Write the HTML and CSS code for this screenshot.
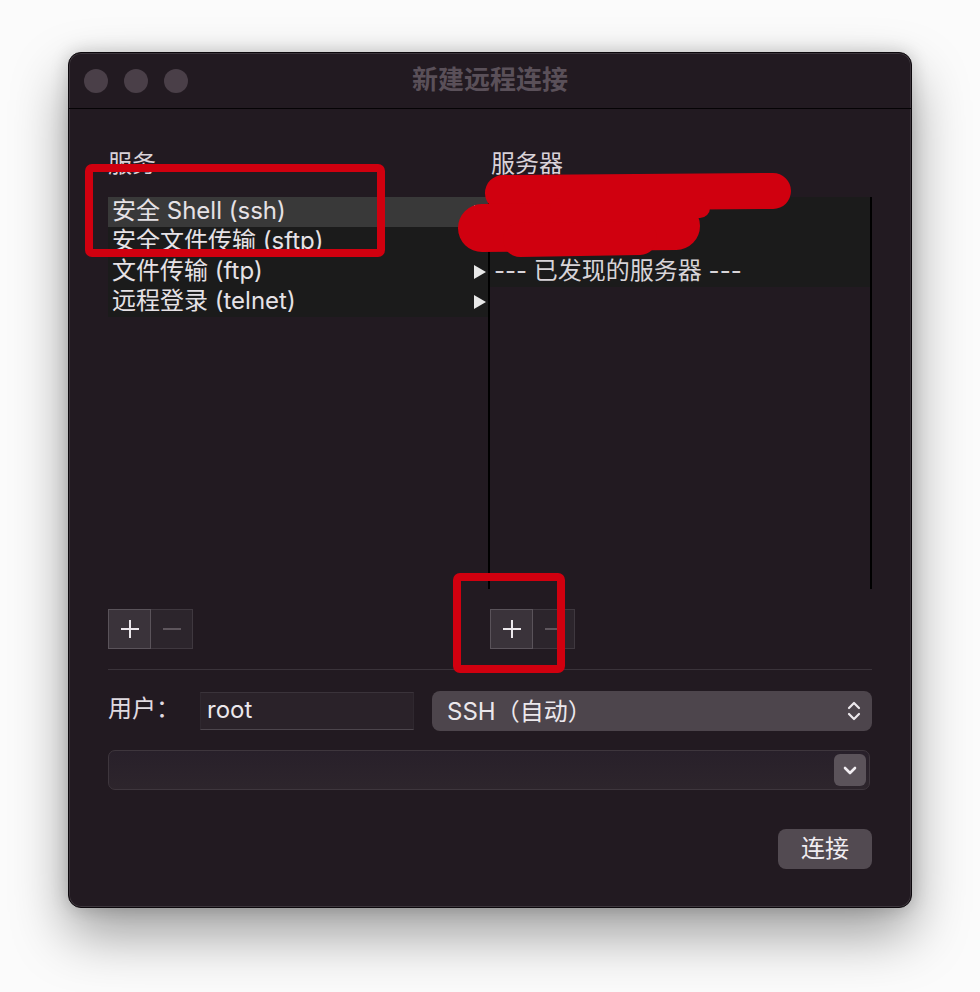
FILE: index.html
```html
<!DOCTYPE html>
<html lang="zh-CN">
<head>
<meta charset="utf-8">
<title>新建远程连接</title>
<link rel="stylesheet" href="styles.css">
</head>
<body>
<div class="page">
  <div class="window">
    <div class="titlebar">
      <div class="lights">
        <span class="light"></span><span class="light"></span><span class="light"></span>
      </div>
      <div class="title">新建远程连接</div>
      <div></div>
    </div>
    <div class="content">
      <div class="columns">
        <div class="col col-left">
          <div class="label">服务</div>
          <div class="list">
            <div class="row selected"><span>安全 Shell (ssh)</span><i class="tri"></i></div>
            <div class="row"><span>安全文件传输 (sftp)</span><i class="tri"></i></div>
            <div class="row"><span>文件传输 (ftp)</span><i class="tri"></i></div>
            <div class="row"><span>远程登录 (telnet)</span><i class="tri"></i></div>
          </div>
          <div class="pm">
            <button class="pm-btn plus"><svg width="20" height="20" viewBox="0 0 20 20"><path d="M10 1v18M1 10h18" stroke="#ece8ec" stroke-width="2"/></svg></button>
            <button class="pm-btn minus"><svg width="20" height="20" viewBox="0 0 20 20"><path d="M1 10h18" stroke="#5e565d" stroke-width="2"/></svg></button>
          </div>
        </div>
        <div class="col col-right">
          <div class="label">服务器</div>
          <div class="list list-right">
            <div class="row"></div>
            <div class="row"></div>
            <div class="row"><span>--- 已发现的服务器 ---</span></div>
          </div>
          <div class="pm">
            <button class="pm-btn plus"><svg width="20" height="20" viewBox="0 0 20 20"><path d="M10 1v18M1 10h18" stroke="#ece8ec" stroke-width="2"/></svg></button>
            <button class="pm-btn minus"><svg width="20" height="20" viewBox="0 0 20 20"><path d="M1 10h18" stroke="#5e565d" stroke-width="2"/></svg></button>
          </div>
        </div>
      </div>
      <div class="sep"></div>
      <div class="form-row">
        <div class="user-label">用户：</div>
        <div class="input">root</div>
        <div class="popup">
          <span>SSH（自动）</span>
          <svg class="updown" width="16" height="26" viewBox="0 0 16 26"><path d="M3 10l5-5 5 5M3 16l5 5 5-5" fill="none" stroke="#ece8ec" stroke-width="2.2" stroke-linecap="round" stroke-linejoin="round"/></svg>
        </div>
      </div>
      <div class="combo">
        <div class="combo-btn"><svg width="32" height="32" viewBox="0 0 32 32"><path d="M11 14l5 5 5-5" fill="none" stroke="#f2eef2" stroke-width="2.6" stroke-linecap="round" stroke-linejoin="round"/></svg></div>
      </div>
      <div class="actions">
        <button class="connect">连接</button>
      </div>
    </div>
  </div>
  <svg class="marks" width="980" height="992" viewBox="0 0 980 992">
    <rect x="89" y="168" width="292" height="85" rx="3" fill="none" stroke="#d0000f" stroke-width="8"/>
    <rect x="457" y="577" width="104" height="92" rx="3" fill="none" stroke="#d0000f" stroke-width="8"/>
    <g fill="#d0000f" stroke="#d0000f" stroke-linecap="round" stroke-linejoin="round">
      <path d="M503 193 L773 191" stroke-width="36" fill="none"/>
      <path d="M482 228 L676 226" stroke-width="48" fill="none"/>
      <path d="M520 240 L640 238" stroke-width="34" fill="none"/>
      <path d="M560 208 L700 208" stroke-width="20" fill="none"/>
    </g>
  </svg>
</div>
</body>
</html>
```
FILE: styles.css
```css
* { box-sizing: border-box; }
html, body { margin: 0; padding: 0; }
body {
  background: #fbfbfb;
  font-family: Inter, "Noto Sans CJK SC", sans-serif;
  color: #e6e2e6;
}
.page {
  position: relative;
  width: 980px;
  height: 992px;
  padding: 52px 68px 0 68px;
}
.window {
  width: 844px;
  height: 856px;
  background: #221a21;
  border-radius: 13px;
  border: 1px solid #0c080c;
  box-shadow: inset 0 0 0 1px rgba(255,255,255,0.12),
              0 26px 55px rgba(0,0,0,0.38),
              0 0 18px rgba(0,0,0,0.18);
  overflow: hidden;
  display: flex;
  flex-direction: column;
}
.titlebar {
  height: 56px;
  border-bottom: 1px solid #050305;
  display: grid;
  grid-template-columns: 1fr auto 1fr;
  align-items: center;
  flex: none;
}
.lights {
  display: flex;
  gap: 16px;
  padding-left: 15px;
  padding-top: 1px;
}
.light {
  width: 24px;
  height: 24px;
  border-radius: 50%;
  background: #4a3f48;
}
.title {
  font-family: "Noto Sans CJK SC", sans-serif;
  font-size: 26px;
  font-weight: 700;
  color: #5a5059;
  line-height: 30px;
  margin-top: -5px;
}
.content {
  padding: 40px 39px 0 39px;
  display: flex;
  flex-direction: column;
}
.columns {
  display: grid;
  grid-template-columns: 380px 384px;
}
.label {
  font-size: 24px;
  line-height: 30px;
  height: 30px;
  color: #d9d2d9;
  margin-bottom: 18px;
}
.col-right .label { padding-left: 3px; }
.list {
  height: 392px;
}
.list-right {
  border-left: 2px solid #000;
  border-right: 2px solid #000;
}
.row {
  height: 30px;
  background: #1b1b1b;
  display: flex;
  align-items: center;
  justify-content: space-between;
  padding: 0 2px 0 4px;
  font-size: 24px;
  line-height: 28px;
  color: #e6e2e6;
  white-space: nowrap;
}
.row span { margin-top: -3px; }
.list-right .row { padding-left: 4px; color: #d8d4d8; }
.row.selected { background: #393939; }
.tri {
  width: 0;
  height: 0;
  border-left: 12px solid #e8e8e8;
  border-top: 7px solid transparent;
  border-bottom: 7px solid transparent;
}
.pm {
  display: flex;
  margin-top: 20px;
  height: 40px;
}
.col-right .pm { padding-left: 2px; }
.pm-btn {
  width: 43px;
  height: 40px;
  padding: 0;
  margin: 0;
  display: flex;
  align-items: center;
  justify-content: center;
  border: 1px solid #534c53;
}
.pm-btn.plus { background: #3a333a; border-color: #5a535a; }
.pm-btn.minus { background: #2c252c; border-color: #3f383f; border-left: none; width: 42px; }
.sep {
  height: 1px;
  background: #3a333a;
  margin-top: 20px;
}
.form-row {
  display: flex;
  align-items: center;
  margin-top: 21px;
  height: 40px;
}
.user-label {
  width: 92px;
  font-size: 24px;
  color: #e0dae0;
  line-height: 30px;
  margin-top: -4px;
}
.input {
  width: 214px;
  height: 38px;
  background: #2a2229;
  border-top: 1px solid #3a333a;
  border-bottom: 1px solid #4c454c;
  border-left: 1px solid #2f282f;
  border-right: 1px solid #2f282f;
  font-size: 24px;
  line-height: 34px;
  padding-left: 6px;
  color: #ece8ec;
}
.popup {
  margin-left: 18px;
  flex: 1;
  height: 40px;
  background: #4d454c;
  border-radius: 8px;
  display: flex;
  align-items: center;
  justify-content: space-between;
  padding: 0 10px 0 15px;
  font-size: 24px;
  color: #ece8ec;
}
.popup span { margin-top: -4px; }
.combo {
  margin-top: 19px;
  width: 762px;
  height: 40px;
  border: 1px solid #3e363d;
  border-radius: 7px;
  background: linear-gradient(#28202a, #2d252c);
  display: flex;
  align-items: center;
  justify-content: flex-end;
  padding-right: 3px;
}
.combo-btn {
  width: 32px;
  height: 32px;
  border-radius: 6px;
  background: #5b535a;
  display: flex;
  align-items: center;
  justify-content: center;
}
.actions {
  display: flex;
  justify-content: flex-end;
  margin-top: 39px;
}
.connect {
  width: 94px;
  height: 40px;
  border: none;
  border-radius: 8px;
  background: #524a51;
  color: #f0ecf0;
  font-family: "Noto Sans CJK SC", sans-serif;
  font-size: 24px;
  line-height: 30px;
  padding: 0 0 5px 0;
}
.marks {
  position: absolute;
  top: 0;
  left: 0;
  pointer-events: none;
}
```
